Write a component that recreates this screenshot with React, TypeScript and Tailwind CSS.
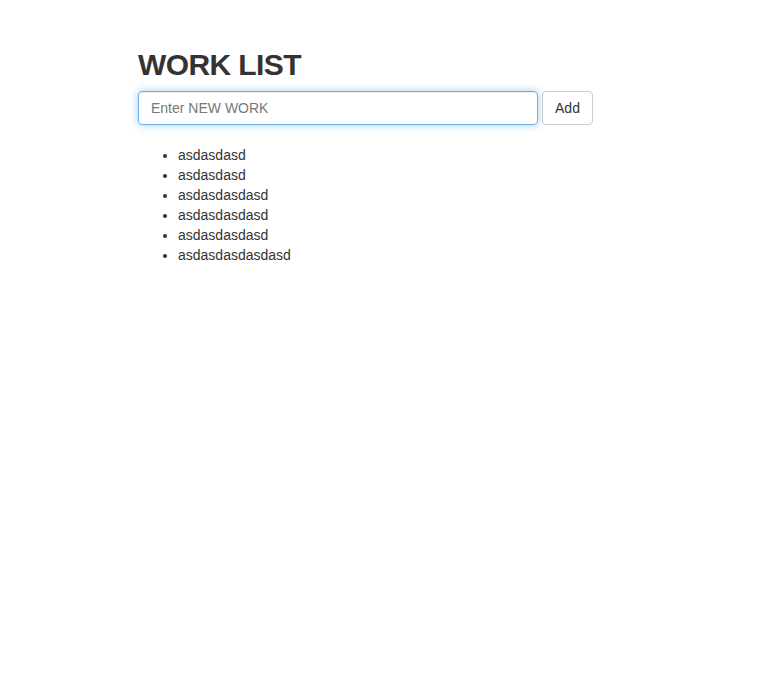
export default function App() {
  return (
    <div className="min-h-screen bg-white text-[#333] text-[14px] leading-[20px]" style={{ fontFamily: '"Liberation Sans", Arial, sans-serif' }}>
      <div className="pl-[138px] pt-[48px]">
        <h1 className="text-[30px] leading-[33px] font-bold tracking-[-0.6px] m-0">WORK LIST</h1>
        <div className="flex items-center gap-[4px] mt-[10px]">
          <input
            className="w-[400px] h-[34px] px-[12px] text-[14px] text-[#555] border border-[#66afe9] rounded-[4px] outline-none shadow-[inset_0_1px_1px_rgba(0,0,0,0.075),0_0_8px_rgba(102,175,233,0.6)] placeholder:text-[#777]"
            placeholder="Enter NEW WORK"
          />
          <button className="h-[34px] w-[51px] text-[14px] text-[#333] bg-white border border-[#ccc] rounded-[4px]">Add</button>
        </div>
        <ul className="list-disc pl-[40px] mt-[20px]">
          {["asdasdasd", "asdasdasd", "asdasdasdasd", "asdasdasdasd", "asdasdasdasd", "asdasdasdasdasd"].map((t, i) => (
            <li key={i}>{t}</li>
          ))}
        </ul>
      </div>
    </div>
  );
}
